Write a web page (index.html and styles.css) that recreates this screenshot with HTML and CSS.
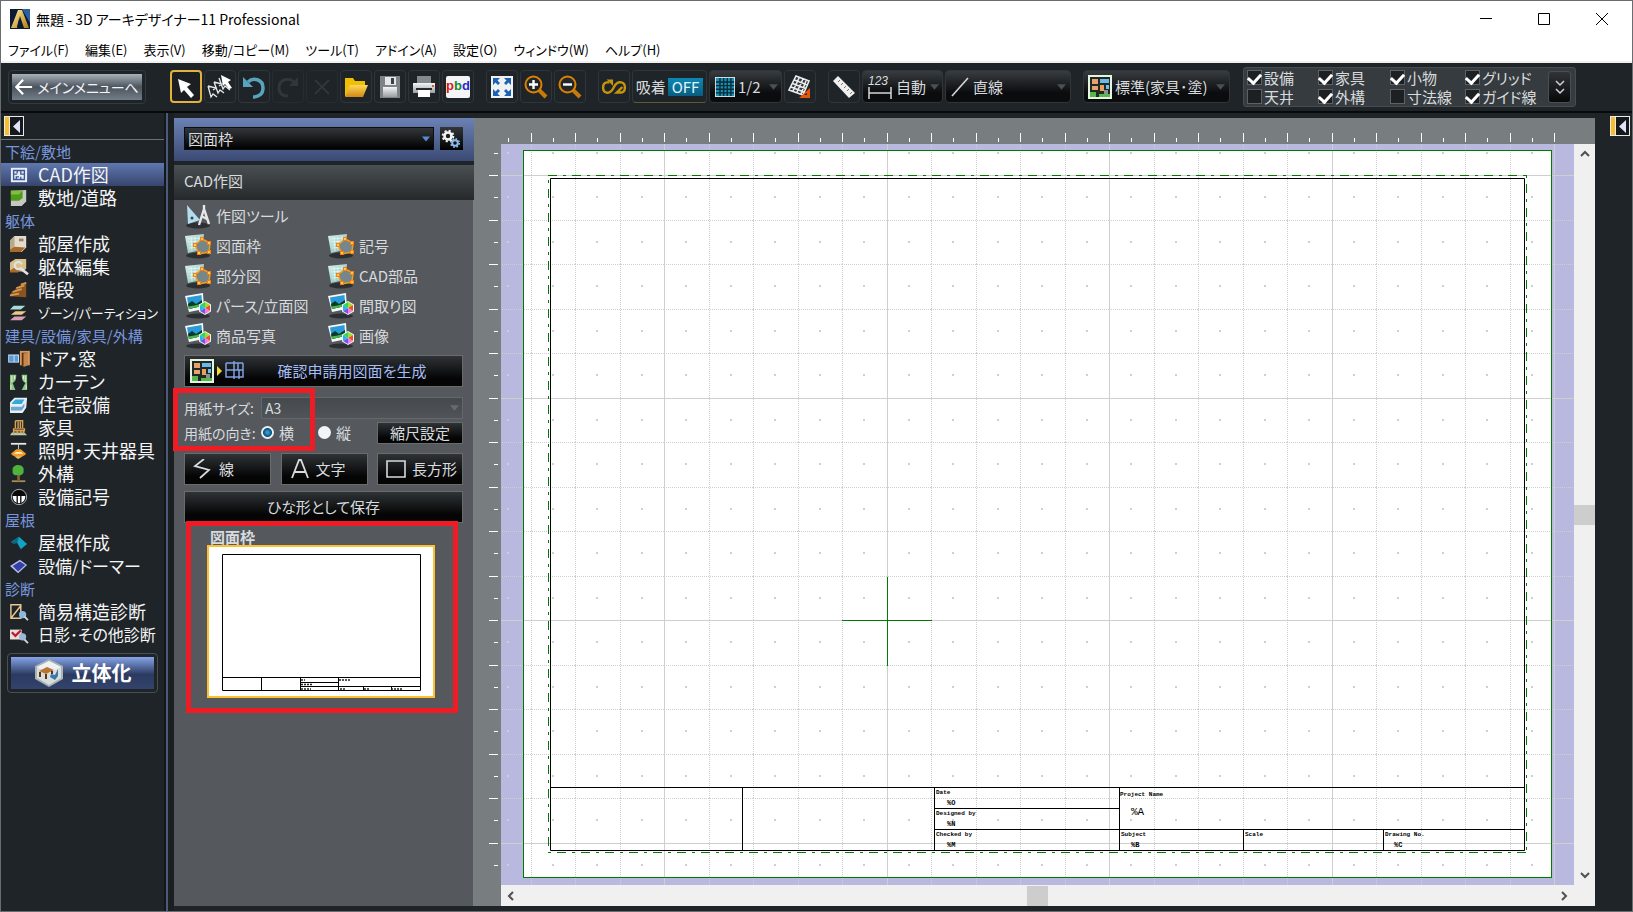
FILE: index.html
```html
<!DOCTYPE html>
<html lang="ja">
<head>
<meta charset="utf-8">
<title>無題 - 3D アーキデザイナー11 Professional</title>
<link rel="stylesheet" href="styles.css">
</head>
<body>
<svg class="defs" aria-hidden="true">
  <defs>
    <linearGradient id="gold" x1="0" y1="0" x2="1" y2="1"><stop offset="0" stop-color="#fff0a0"/><stop offset="1" stop-color="#b57a10"/></linearGradient>
    <linearGradient id="metal" x1="0" y1="0" x2="0" y2="1"><stop offset="0" stop-color="#f4f5f6"/><stop offset="1" stop-color="#9a9ea3"/></linearGradient>
    <linearGradient id="folder" x1="0" y1="0" x2="0" y2="1"><stop offset="0" stop-color="#ffd75a"/><stop offset="1" stop-color="#d08a12"/></linearGradient>
    <linearGradient id="tile" x1="0" y1="0" x2="1" y2="1"><stop offset="0" stop-color="#d9f2ee"/><stop offset="1" stop-color="#7fb8b2"/></linearGradient>
    <symbol id="i-arrow" viewBox="0 0 10 6"><path d="M0 0h10L5 6z" fill="currentColor"/></symbol>
    <symbol id="i-dock" viewBox="0 0 20 20"><path d="M0 0h20v20H0z" fill="#e8eaee"/><path d="M1 1h4v18H1z" fill="#f8bd2a"/><path d="M6 1h13v18H6z" fill="#16191c"/><path d="M16 4v13l-7-6.500z" fill="#dfe4fa"/></symbol>
    <symbol id="i-plan" viewBox="0 0 24 24"><path d="M0 0h24v24H0z" fill="#e6f4e0"/><path d="M2 2h20v20H2z" fill="#1f2a24"/><path d="M2 17h6v5H2zM11 19h11v3H11z" fill="#55b84e"/><path d="M4 4h6v5H4zM4 11h6v4H4z" fill="#e8a070"/><path d="M12 4h9v4h-9z" fill="#6ab8ee"/><path d="M12 10h4v6h-4z" fill="#e8a05a"/><path d="M18 10h3v4h-3z" fill="#6cc0f0"/><path d="M16 15h4v4h-4z" fill="#8a9094"/></symbol>
    <symbol id="i-shape" viewBox="0 0 26 26"><ellipse cx="13" cy="22.500" rx="12" ry="3" fill="#2c3033"/><path d="M0 3l19-2-2 16-14 3z" fill="url(#tile)"/><path d="M3 6l13-1M3 9l13-1M4 12l12-1M4 15l11-1M6 4l1 14M10 4v13M14 3v13" stroke="#f4fffc" stroke-width=".6"/><path d="M10 12l7-6 8 4-1 9-10 2z" fill="#75878a" stroke="#e8a020" stroke-width="1.500"/><path d="M8 10h4v4H8zM15 4h4v4h-4zM22 8h4v4h-4zM22 17h4v4h-4zM12 18h4v4h-4z" fill="#ff7a12"/><path d="M9 11h2v2H9zM16 5h2v2h-2zM23 9h2v2h-2zM23 18h2v2h-2zM13 19h2v2h-2z" fill="#ffd04a"/></symbol>
    <symbol id="i-photo" viewBox="0 0 26 26"><ellipse cx="13" cy="23" rx="12" ry="2.500" fill="#2c3033"/><path d="M0 3l18-3 1 16-15 3z" fill="#f6f8f8"/><path d="M2 4.500l14.500-2.400.7 11L4 16z" fill="#2a9ad8"/><path d="M3 11l4-3 4 3 6-4v6L4 16z" fill="#0c3a2a"/><path d="M3.500 13.500l6-1 7.500-2v2.500L4 16z" fill="#49b845"/><path d="M20 8l6 3.500v7L20 22l-6-3.500v-7z" fill="#f4f4f4"/><path d="M20 15V9l5 3z" fill="#9be02c"/><path d="M20 15l5-3v6z" fill="#f05028"/><path d="M20 15l5 3-5 3z" fill="#f080d8"/><path d="M20 15v6l-5-3z" fill="#7a50e8"/><path d="M20 15l-5 3v-6z" fill="#22b8e8"/><path d="M20 15l-5-3 5-3z" fill="#38d060"/></symbol>
    <pattern id="dots" patternUnits="userSpaceOnUse" x="6" y="8" width="89" height="89"><path d="M0 0h2v2H0zM45 0h2v2h-2zM0 44h2v2H0zM45 44h2v2h-2z" fill="#cfcfcf"/></pattern>
    <pattern id="cells" patternUnits="userSpaceOnUse" x="74" y="31" width="89" height="89"><path d="M.5 0v89M45.500 0v89M0 .5h89M0 45.500h89" stroke="#cfcfcf" stroke-dasharray="1 1"/></pattern>
    <pattern id="blocks" patternUnits="userSpaceOnUse" x="163" y="31" width="445" height="445"><path d="M.5 0v445M223.500 0v445M0 .5h445M0 223.500h445" stroke="#cfcfcf"/></pattern>
    <pattern id="ticks-x" patternUnits="userSpaceOnUse" x="74" y="0" width="89" height="26"><path d="M.5 15v9M22.500 20v4M45.500 15v9M67.500 20v4" stroke="#fff"/></pattern>
    <pattern id="ticks-y" patternUnits="userSpaceOnUse" x="0" y="31" width="26" height="89"><path d="M15 .5h9M20 22.500h4M15 45.500h9M20 67.500h4" stroke="#fff"/></pattern>
  </defs>
</svg>

<header class="titlebar">
  <svg class="app-icon" viewBox="0 0 20 20"><path d="M0 0h20v20H0z" fill="#0a1b33"/><path d="M12 0h8v14z" fill="#2b5f9f"/><path d="M8 1h4l7 18h-5l-4-12-3 12H1z" fill="url(#gold)"/><path d="M9 10l3 6-5 2z" fill="#0a1b33"/></svg>
  <h1 class="title">無題 - 3D アーキデザイナー11 Professional</h1>
  <div class="win-buttons">
    <button type="button" aria-label="最小化"><svg viewBox="0 0 14 14"><path d="M1 6.500h12"/></svg></button>
    <button type="button" aria-label="最大化"><svg viewBox="0 0 14 14"><path d="M1.500 1.500h11v11h-11z"/></svg></button>
    <button type="button" aria-label="閉じる"><svg viewBox="0 0 14 14"><path d="M1 1l12 12M13 1L1 13"/></svg></button>
  </div>
</header>

<nav class="menubar">
  <button type="button">ファイル(F)</button>
  <button type="button">編集(E)</button>
  <button type="button">表示(V)</button>
  <button type="button">移動/コピー(M)</button>
  <button type="button">ツール(T)</button>
  <button type="button">アドイン(A)</button>
  <button type="button">設定(O)</button>
  <button type="button">ウィンドウ(W)</button>
  <button type="button">ヘルプ(H)</button>
</nav>

<div class="toolbar">
  <button type="button" class="main-menu"><span class="main-menu-face"><svg viewBox="0 0 20 18"><path d="M19 9H2M9 1L1.500 9 9 17" fill="none" stroke="#fff" stroke-width="2.400"/></svg>メインメニューへ</span></button>
  <div class="tools">
    <button type="button" class="tool active" aria-label="選択"><svg viewBox="0 0 26 26"><path d="M5 5l13 5-4 3 7 8-3 3-7-8-3 3z" fill="#fff"/></svg></button>
    <button type="button" class="tool" aria-label="複数選択"><svg viewBox="0 0 26 26"><path d="M1 12l3 11 2-3 4 3M7 8l4 11 2-3 4 3M12 4l4 11 2-3 5 4M1 12l8 2-3 2M7 8l8 2-3 2" fill="none" stroke="#e8e8e8" stroke-width="1.300"/><path d="M14 1l10 5-3 2 4 6-3 1-4-5-2 2z" fill="#fff"/></svg></button>
    <button type="button" class="tool" aria-label="元に戻す"><svg viewBox="0 0 26 26"><path d="M7 8c5-5 15-3 15 6 0 6-4 9-10 9" fill="none" stroke="#58a3bd" stroke-width="3.500"/><path d="M2 3v10h10z" fill="#58a3bd"/></svg></button>
    <button type="button" class="tool off" aria-label="やり直し"><svg viewBox="0 0 26 26"><path d="M19 8C14 3 4 5 4 14c0 6 4 8 9 8" fill="none" stroke="#31363a" stroke-width="3"/><path d="M23 3v9h-9z" fill="#31363a"/></svg></button>
    <button type="button" class="tool off" aria-label="削除"><svg viewBox="0 0 26 26"><path d="M6 6l14 14M20 6L6 20" stroke="#31363a" stroke-width="2"/></svg></button>
    <button type="button" class="tool" aria-label="開く"><svg viewBox="0 0 26 26"><path d="M2 4h8l2 3h10v5L6 22H2z" fill="#f0c000"/><path d="M7 11h18l-5 12H2z" fill="url(#folder)"/></svg></button>
    <button type="button" class="tool" aria-label="保存"><svg viewBox="0 0 26 26"><path d="M3 2h20v22H3z" fill="#7e8387"/><path d="M8 3h11v8H8z" fill="#e6e7e8"/><path d="M14 4h3v6h-3z" fill="#3a3f43"/><path d="M6 13h14v10H6z" fill="url(#metal)"/></svg></button>
    <button type="button" class="tool" aria-label="印刷"><svg viewBox="0 0 26 26"><path d="M6 2h14v7H6z" fill="#83898e"/><path d="M2 9h22v10H2z" fill="url(#metal)"/><path d="M5 14h16v2H5z" fill="#26292c"/><path d="M7 16h12v7H7z" fill="#fff"/><path d="M21 11h2v2h-2z" fill="#df5d23"/></svg></button>
    <button type="button" class="tool" aria-label="部品"><span class="pbd-face"><b class="red">p</b><b class="leaf">b</b><b class="blue">d</b></span></button>
  </div>
  <div class="tools">
    <button type="button" class="tool" aria-label="全体表示"><svg viewBox="0 0 26 26"><path d="M2 2h22v22H2z" fill="#f0f1f2"/><path d="M4 4h7L8.500 6.500 11 9l-2 2-2.500-2.500L4 11zM22 4h-7l2.500 2.500L15 9l2 2 2.500-2.500L22 11zM4 22h7l-2.500-2.500L11 17l-2-2-2.500 2.500L4 15zM22 22h-7l2.500-2.500L15 17l2-2 2.500 2.500L22 15z" fill="#1b62b0"/></svg></button>
    <button type="button" class="tool" aria-label="拡大"><svg viewBox="0 0 26 26"><path d="M15 15l8 8" stroke="#c87a08" stroke-width="4"/><circle cx="10.500" cy="10.500" r="8" fill="#22272b" stroke="#dd8200" stroke-width="2"/><path d="M6 10.500h9M10.500 6v9" stroke="#fff" stroke-width="2.400"/></svg></button>
    <button type="button" class="tool" aria-label="縮小"><svg viewBox="0 0 26 26"><path d="M15 15l8 8" stroke="#c87a08" stroke-width="4"/><circle cx="10.500" cy="10.500" r="8" fill="#22272b" stroke="#dd8200" stroke-width="2"/><path d="M6 10.500h9" stroke="#fff" stroke-width="2.400"/></svg></button>
  </div>
  <div class="tools">
    <button type="button" class="tool" aria-label="連続"><svg viewBox="0 0 28 26"><path d="M9 8H6c-5 1-5 10 0 11 4 1 6-2 8-6s4-6 8-5c5 1 5 10 0 11h-5l6-6" fill="none" stroke="#c4940c" stroke-width="2.600"/><path d="M6 5h7v7z" fill="#c4940c"/></svg></button>
    <button type="button" class="tool snap">吸着<span class="snap-off">OFF</span></button>
    <label class="drop drop-grid" aria-label="グリッド分割"><svg class="drop-icon" viewBox="0 0 22 22"><path d="M0 0h22v22H0z" fill="#dfe5e8"/><path d="M1 1h20v20H1z" fill="#1592b4"/><path d="M5.500 1v20M9.500 1v20M13.500 1v20M17.500 1v20M1 5.500h20M1 9.500h20M1 13.500h20M1 17.500h20" stroke="#0a2a38" stroke-width="1.500"/></svg><select><option>1/2</option></select><svg class="drop-arrow"><use href="#i-arrow"/></svg></label>
    <button type="button" class="tool" aria-label="グリッド設定"><svg viewBox="0 0 26 26"><path d="M9 2l13 5-6 14L2 16z" fill="#30363a"/><path d="M9 2l13 5-6 14L2 16zM7.500 6l13 5M5.500 9.500l13 5M4 13l13 5M12 4L6 17M16 5l-6 13M19 7l-5 13" fill="none" stroke="#ececec" stroke-width="1.600"/><path d="M23 14v10H12z" fill="#e2560e"/><path d="M20 19v2h-3z" fill="#22272b"/></svg></button>
  </div>
  <div class="tools">
    <button type="button" class="tool" aria-label="計測"><svg viewBox="0 0 26 26"><path d="M7 2l17 17-6 5L2 7z" fill="#f0f0f0"/><path d="M9 6l-2 2M12 9l-2 2M15 12l-2 2M18 15l-2 2M21 18l-2 2" stroke="#777" stroke-width="1"/></svg></button>
    <label class="drop drop-auto" aria-label="寸法"><span class="dim-icon"><i>123</i><svg viewBox="0 0 24 12"><path d="M1 0v12M23 0v12M1 6h22" fill="none" stroke="#d5d8da" stroke-width="1.500"/></svg></span><select><option>自動</option></select><svg class="drop-arrow"><use href="#i-arrow"/></svg></label>
    <label class="drop drop-line" aria-label="線種"><svg class="drop-icon" viewBox="0 0 20 20"><path d="M2 19L18 1" stroke="#d5d8da" stroke-width="1.600"/></svg><select><option>直線</option></select><svg class="drop-arrow"><use href="#i-arrow"/></svg></label>
  </div>
  <label class="drop drop-std" aria-label="表示設定"><svg class="drop-icon std-icon"><use href="#i-plan"/></svg><select><option>標準(家具･塗)</option></select><svg class="drop-arrow"><use href="#i-arrow"/></svg></label>
  <div class="layers">
    <div class="layer-grid">
      <label><input type="checkbox" checked>設備</label><label><input type="checkbox" checked>家具</label><label><input type="checkbox" checked>小物</label><label><input type="checkbox" checked>グリッド</label>
      <label><input type="checkbox">天井</label><label><input type="checkbox" checked>外構</label><label><input type="checkbox">寸法線</label><label><input type="checkbox" checked>ガイド線</label>
    </div>
    <button type="button" class="more" aria-label="その他"><svg viewBox="0 0 10 16"><path d="M1 2l4 4 4-4M1 10l4 4 4-4" fill="none" stroke="#d0d2d4" stroke-width="1.500"/></svg></button>
  </div>
</div>

<main class="body">
  <aside class="sidebar">
    <button type="button" class="dock" aria-label="たたむ"><svg><use href="#i-dock"/></svg></button>
    <nav class="side-nav">
      <h2>下絵/敷地</h2>
      <button type="button" class="selected"><svg viewBox="0 0 24 20"><path d="M3 2h18v16H3z" fill="#e8edf6"/><path d="M6 5h12v10H6zM6 9h4M10 5v3M14 5v4h4M9 15v-3h3M14 12v3" fill="none" stroke="#3c5898" stroke-width="1.500"/></svg>CAD作図</button>
      <button type="button"><svg viewBox="0 0 24 20"><path d="M3 2l17-1v13l-5 5H3z" fill="#c4c8bf"/><path d="M3 2h13v8l-4 3H3z" fill="#4f9a1c"/><path d="M3 2h13l-4 4H3z" fill="#7cc03c"/></svg>敷地/道路</button>
      <h2>躯体</h2>
      <button type="button"><svg viewBox="0 0 24 20"><path d="M2 6l5-5h13v13l-5 5H2z" fill="#e4dccb"/><path d="M2 6l5-5v12l-5 3z" fill="#b9a88a"/><path d="M2 16l5-3 12 1-5 5H2z" fill="#a8692a"/><path d="M12 4h5v3h-5z" fill="#8f8570"/></svg>部屋作成</button>
      <button type="button"><svg viewBox="0 0 24 20"><path d="M2 5l6-4h12v11l-4 3H2z" fill="#d9c08a"/><path d="M2 14l6-4 5 3-2 3H2z" fill="#a8692a"/><path d="M13 11l9 7" stroke="#dfe1e3" stroke-width="3"/><path d="M15 7a4 4 0 1 0-2 5" fill="none" stroke="#dfe1e3" stroke-width="2.500"/></svg>躯体編集</button>
      <button type="button"><svg viewBox="0 0 24 20"><path d="M2 17l2-5h4V8h4V5h4l4-4v17z" fill="#8a5420"/><path d="M2 16l10-2M5 12l10-3M9 8l9-3M14 4l6-2" stroke="#d89a50" stroke-width="2"/></svg>階段</button>
      <button type="button" class="long"><svg viewBox="0 0 24 20"><path d="M6 2h13l-5 4H2z" fill="#a8dcd8"/><path d="M8 8h12l-5 4H3z" fill="#ecc888"/><path d="M7 14h13l-5 4H2z" fill="#d8a0b4"/></svg>ゾーン/パーティション</button>
      <h2>建具/設備/家具/外構</h2>
      <button type="button"><svg viewBox="0 0 24 20"><path d="M0 5h12v9H0z" fill="#cfe4f8"/><path d="M1 6h5v7H1zM7 6h4v7H7z" fill="#5b9ad4"/><path d="M13 1h11v16H13z" fill="#d89a60"/><path d="M15 3h7v14h-7z" fill="#5a3414"/><path d="M17 4l5-1v14l-5 2z" fill="#c8874a"/></svg>ドア・窓</button>
      <button type="button"><svg viewBox="0 0 24 20"><path d="M2 2h7c0 5-1 8-4 9l3 8H2zM21 2h-6c0 5 1 8 4 9l-4 8h6z" fill="#8cc484"/><path d="M4 3v7M7 3v4M19 3v7M17 3v4M3 13v5M20 13v5" stroke="#e4f6df"/></svg>カーテン</button>
      <button type="button"><svg viewBox="0 0 24 20"><path d="M2 7l5-5h14l-1 11-4 6H2z" fill="#e4f0f6"/><path d="M5 7l3-3h10l-3 5H4z" fill="#36a8d8"/><path d="M3 12h12l3-4v4l-3 4H3z" fill="#6ca8d0"/></svg>住宅設備</button>
      <button type="button"><svg viewBox="0 0 24 20"><path d="M4 15h14l3 3H2z" fill="#b8ccb0"/><path d="M8 2h8v8M8 2v8M6 11h12v2H6zM6 13v4M17 13v4M10 13v3M14 13v3M11 3v7M13.500 3v7" fill="none" stroke="#d8a050" stroke-width="1.600"/></svg>家具</button>
      <button type="button"><svg viewBox="0 0 24 20"><path d="M3 1h17v2H3z" fill="#e8e8e8"/><path d="M11.500 3v5" stroke="#ddd"/><path d="M9 8h5l6 5c-4 5-13 5-17 0z" fill="#f09a28"/><path d="M9 11h5l3 2H6z" fill="#fff0c8"/><path d="M7 16h9l-5 3z" fill="#e8c060"/></svg>照明・天井器具</button>
      <button type="button"><svg viewBox="0 0 24 20"><path d="M4 17h15v2H4z" fill="#a09058"/><path d="M10 10h3v8h-3z" fill="#8a6030"/><path d="M11 0c5 0 7 4 6 6 1 4-3 6-6 5-4 1-7-1-6-5-1-3 2-6 6-6z" fill="#4eb33c"/></svg>外構</button>
      <button type="button"><svg viewBox="0 0 24 20"><circle cx="12" cy="10" r="8.500" fill="#0a0a0a" stroke="#b8babc"/><path d="M5 9h14c0 5-3 8-7 8s-7-3-7-8z" fill="#fff"/><path d="M10 9v8M14 9v8" stroke="#111" stroke-width="1.500"/></svg>設備記号</button>
      <h2>屋根</h2>
      <button type="button"><svg viewBox="0 0 24 20"><path d="M3 9l9-6 9 8-7 6-4-7z" fill="#12a3c4"/><path d="M3 9l9-6-2 7-4 1z" fill="#0b6a88"/></svg>屋根作成</button>
      <button type="button" class="snug"><svg viewBox="0 0 24 20"><path d="M2 10l11-7 8 6-10 9z" fill="#b8bde8"/><path d="M5 10l8-5 6 4-8 7z" fill="#3440a8"/></svg>設備/ドーマー</button>
      <h2>診断</h2>
      <button type="button"><svg viewBox="0 0 24 20"><path d="M3 2h11v15H3zM3 17L14 3" fill="none" stroke="#e8c890" stroke-width="1.600"/><circle cx="16" cy="13" r="4" fill="#8cb8e0"/><path d="M18 15l4 4" stroke="#d0d4d8" stroke-width="2"/></svg>簡易構造診断</button>
      <button type="button" class="tight"><svg viewBox="0 0 24 20"><path d="M2 4h13v11H2z" fill="#e8e0dc"/><path d="M4 7l4 4 6-6" fill="none" stroke="#c01c30" stroke-width="2.500"/><circle cx="16" cy="12" r="4" fill="#9cb8d4"/><path d="M18 15l4 4" stroke="#d0d4d8" stroke-width="2"/></svg>日影･その他診断</button>
    </nav>
    <button type="button" class="solid"><span class="solid-face"><svg viewBox="0 0 30 28"><path d="M15 0l14 7v13l-14 8L1 20V7z" fill="#aab2b2"/><path d="M15 2l12 6v11l-12 7-12-7V8z" fill="#d8dddd"/><path d="M15 2l12 6-12 6L3 8z" fill="#eef2f2"/><path d="M5 12l8-4 7 3-8 4z" fill="#b87430"/><path d="M6 13v5M12 15v5M18 12v3" stroke="#5b3410" stroke-width="2"/><path d="M17 15l4 1 3-6v7l-3 4-5-3z" fill="#3a78a8"/></svg>立体化</span></button>
  </aside>

  <section class="panel">
    <div class="panel-head">
      <label class="drop panel-select" aria-label="種類"><select><option>図面枠</option></select><svg class="drop-arrow"><use href="#i-arrow"/></svg></label>
      <button type="button" class="gear" aria-label="設定"><svg viewBox="0 0 22 22"><circle cx="8" cy="8" r="3.500" fill="none" stroke="#f4f4f4" stroke-width="2.600"/><circle cx="8" cy="8" r="5.300" fill="none" stroke="#f4f4f4" stroke-width="2" stroke-dasharray="2.080 2.080"/><circle cx="15" cy="15" r="2.800" fill="none" stroke="#8fbdea" stroke-width="2"/><circle cx="15" cy="15" r="4.200" fill="none" stroke="#8fbdea" stroke-width="1.600" stroke-dasharray="1.650 1.650"/></svg></button>
    </div>
    <h2 class="panel-title">CAD作図</h2>
    <div class="panel-body">
      <div class="part-grid">
        <button type="button" class="full"><svg viewBox="0 0 26 26"><ellipse cx="13" cy="22.500" rx="12" ry="3" fill="#2c3033"/><path d="M2 2l13 15-12 4z" fill="#b4dcec"/><circle cx="7" cy="15" r="1.500" fill="#33454e"/><path d="M19 2v4M19 6l-5 16M19 6l5 15M16 13l6 3" fill="none" stroke="#e6e6e6" stroke-width="2.400"/></svg>作図ツール</button>
        <button type="button"><svg><use href="#i-shape"/></svg>図面枠</button>
        <button type="button"><svg><use href="#i-shape"/></svg>記号</button>
        <button type="button"><svg><use href="#i-shape"/></svg>部分図</button>
        <button type="button"><svg><use href="#i-shape"/></svg>CAD部品</button>
        <button type="button"><svg><use href="#i-photo"/></svg>パース/立面図</button>
        <button type="button"><svg><use href="#i-photo"/></svg>間取り図</button>
        <button type="button"><svg><use href="#i-photo"/></svg>商品写真</button>
        <button type="button"><svg><use href="#i-photo"/></svg>画像</button>
      </div>
      <button type="button" class="dark generate"><svg class="gen-icon" viewBox="0 0 56 24"><use href="#i-plan" width="24" height="24"/><path d="M27 7l5 5-5 5z" fill="#f8d838"/><path d="M36 4h8M36 4v14h8M36 11h8v9M44 2v9h9M53 4v14h-9M48 4v7M44 4h9M49 11v9" fill="none" stroke="#7fa0e0" stroke-width="1.500"/></svg><span>確認申請用図面を生成</span></button>
      <div class="paper">
        <div class="paper-row">
          <label for="paper-size">用紙サイズ:</label>
          <span class="drop size-select"><select id="paper-size"><option>A3</option></select><svg class="drop-arrow"><use href="#i-arrow"/></svg></span>
        </div>
        <div class="paper-row">
          <span>用紙の向き:</span>
          <label class="radio"><input type="radio" name="dir" checked>横</label>
          <label class="radio"><input type="radio" name="dir">縦</label>
          <button type="button" class="dark scale">縮尺設定</button>
        </div>
        <div class="mark"></div>
      </div>
      <div class="draw-row">
        <button type="button" class="dark"><svg viewBox="0 0 20 20"><path d="M11 0L2 7l14 4-9 8" fill="none" stroke="#d8dadc" stroke-width="1.800"/></svg>線</button>
        <button type="button" class="dark"><svg viewBox="0 0 20 20"><path d="M2 19L9 1h2l7 18M5 13h10" fill="none" stroke="#d8dadc" stroke-width="1.800"/></svg>文字</button>
        <button type="button" class="dark"><svg viewBox="0 0 20 20"><path d="M1 2h18v16H1z" fill="none" stroke="#d8dadc" stroke-width="1.600"/></svg>長方形</button>
      </div>
      <button type="button" class="dark save">ひな形として保存</button>
      <figure class="preview">
        <figcaption>図面枠</figcaption>
        <svg viewBox="0 0 224 149"><rect width="224" height="149" fill="#fff"/><path d="M13.500 7.500h198v136h-198zM13.500 130.500h198M52.500 130.500v13M91.500 130.500v13M129.500 130.500v13M91.500 135.500h38M91.500 139.500h120M154.500 139.500v4M182.500 139.500v4" fill="none" stroke="#000"/><path d="M92 133h4M92 137.500h11M92 142h10M130 133h12M131 142h6M155 142h5M182 142h12" stroke="#222" stroke-width="1.500" stroke-dasharray="2 1"/></svg>
      </figure>
    </div>
  </section>

  <section class="work">
    <svg class="ruler-top"><rect width="100%" height="26" fill="url(#ticks-x)"/></svg>
    <svg class="ruler-left"><rect width="26" height="100%" fill="url(#ticks-y)"/></svg>
    <svg class="sheet">
      <rect x="22.500" y="6.500" width="1028" height="727" fill="#fff"/>
      <rect width="100%" height="100%" fill="url(#dots)"/>
      <rect width="100%" height="100%" fill="url(#cells)"/>
      <rect width="100%" height="100%" fill="url(#blocks)"/>
      <rect x="22.500" y="6.500" width="1028" height="727" class="green"/>
      <path d="M47 31.500h978" class="green chain"/>
      <path d="M47.500 31v677" class="green chain chain-left"/>
      <path d="M47 708.500h978M1025.500 31v677" class="green chain chain-low"/>
      <path d="M341 476.500h90M386.500 433v89" class="green"/>
      <path d="M49.500 34.500h974v672h-974zM49.500 643.500h974M241.500 643v63M433.500 643v63M618.500 643v63M433 664.500h185M433 685.500h590M742.500 685v21M882.500 685v21" class="ink"/>
      <g class="tiny">
        <text x="435" y="650">Date</text><text x="446" y="661" class="value">%O</text>
        <text x="435" y="671">Designed by</text><text x="446" y="682" class="value">%N</text>
        <text x="435" y="692">Checked by</text><text x="446" y="703" class="value">%M</text>
        <text x="619" y="652">Project Name</text><text x="630" y="671" class="big">%A</text>
        <text x="620" y="692">Subject</text><text x="630" y="703" class="value">%B</text>
        <text x="744" y="692">Scale</text>
        <text x="884" y="692">Drawing No.</text><text x="893" y="703" class="value">%C</text>
      </g>
    </svg>
    <div class="vscroll"><svg viewBox="0 0 10 10"><path d="M1 7l4-4 4 4"/></svg><span class="thumb"></span><svg viewBox="0 0 10 10"><path d="M1 3l4 4 4-4"/></svg></div>
    <div class="hscroll"><svg viewBox="0 0 10 10"><path d="M7 1L3 5l4 4"/></svg><span class="thumb"></span><svg viewBox="0 0 10 10"><path d="M3 1l4 4-4 4"/></svg></div>
  </section>
  <aside class="right-dock"><button type="button" class="dock" aria-label="開く"><svg><use href="#i-dock"/></svg></button></aside>
</main>
</body>
</html>
```
FILE: styles.css
```css
* { box-sizing: border-box; }
body {
  margin: 0;
  height: 100vh;
  display: flex;
  flex-direction: column;
  overflow: hidden;
  border: 1px solid #6a6d6f;
  background: #1f2428;
  color: #d8dbde;
  font: 15px/20px "Noto Sans CJK JP", "Noto Sans", sans-serif;
  font-feature-settings: "palt";
}
button, select, input { font: inherit; font-feature-settings: inherit; color: inherit; margin: 0; }
button { padding: 0; border: 0; background: none; white-space: nowrap; }
h1, h2, figure { margin: 0; font-weight: 400; font-size: 15px; }
svg { display: block; flex: none; }
.defs { position: absolute; width: 0; height: 0; }

.titlebar { display: flex; align-items: center; flex: none; height: 37px; padding: 0 1px 2px 9px; background: #fff; color: #000; }
.app-icon { width: 20px; height: 20px; }
.title { margin-left: 6px; font-size: 14px; }
.win-buttons { display: flex; margin-left: auto; }
.win-buttons button { width: 58px; height: 34px; display: flex; align-items: center; justify-content: center; }
.win-buttons svg { width: 14px; height: 14px; fill: none; stroke: #000; }
.menubar { display: flex; flex: none; gap: 16px; height: 25px; padding-left: 7px; background: #fff; color: #000; border-bottom: 2px solid #f0f0f0; font-size: 13px; }

.toolbar { display: flex; align-items: center; flex: none; gap: 12px; height: 50px; padding: 0 0 1px 7px; border-bottom: 2px solid #08090a; }
.main-menu { width: 138px; height: 34px; margin-right: 12px; padding: 3px; border: 1px solid #33393d; border-radius: 4px; }
.main-menu-face { display: flex; align-items: center; justify-content: center; gap: 4px; height: 26px; background: linear-gradient(#a9b0b8, #4c555e 50%, #737d87); color: #f2f4f6; font-size: 14px; }
.main-menu-face svg { width: 18px; height: 18px; }
.tools { display: flex; gap: 2px; }
.tool { width: 32px; height: 33px; display: flex; align-items: center; justify-content: center; border: 1px solid #2f3539; border-radius: 4px; }
.tool svg { width: 26px; height: 26px; }
.tool.active { border: 2px solid #e3b23c; background: #1c1f22; }
.tool.off { border-color: #272c30; }
.pbd-face { display: flex; width: 24px; height: 22px; justify-content: center; background: #f4f4f6; font: 700 13px/20px "Liberation Sans", sans-serif; border-radius: 2px; }
.red { color: #d8141c; }
.leaf { color: #128a32; }
.blue { color: #2a28c8; }
.tool.snap { width: 75px; gap: 2px; border-bottom-color: #5e5836; }
.snap-off { padding: 0 4px; background: linear-gradient(#0c88b4, #0a5c80); color: #e0f4ff; line-height: 18px; }
.drop { display: flex; align-items: center; height: 33px; padding: 0 6px; border: 1px solid #2f3539; border-radius: 4px; background: linear-gradient(#383d41, #0b0c0d 70%); }
.drop select { flex: 1; min-width: 0; width: 0; height: 22px; padding: 0; border: 0; appearance: none; background: none; line-height: 20px; }
.drop-icon { width: 20px; height: 20px; margin-right: 3px; }
.drop-arrow { width: 9px; height: 6px; color: #4a5054; }
.drop-grid { width: 73px; padding: 0 3px 0 5px; }
.drop-auto { width: 81px; padding: 0 3px 0 5px; }
.drop-line { width: 126px; padding: 0 4px; }
.drop-std { width: 147px; padding: 0 4px; }
.std-icon { width: 24px; height: 24px; }
.dim-icon { display: grid; width: 24px; margin-right: 4px; font: 12px/12px "Liberation Sans", sans-serif; }
.dim-icon svg { width: 24px; height: 12px; }
.layers { display: flex; flex: none; align-items: center; justify-content: space-between; width: 333px; height: 40px; margin-left: 1px; padding: 0 4px 0 3px; border: 1px solid #474c50; border-radius: 3px; background: #363b3f; }
.layer-grid { display: grid; grid-template-columns: 71px 72px 75px 74px; grid-auto-rows: 19px; }
.layer-grid label { display: flex; align-items: center; gap: 2px; line-height: 19px; white-space: nowrap; }
.layer-grid input { appearance: none; width: 15px; height: 15px; border: 1px solid #5c6165; background: #1d2023; display: grid; place-items: center; }
.layer-grid input:checked::before { content: ""; width: 6px; height: 10px; margin-bottom: 3px; border: solid #fff; border-width: 0 3px 3px 0; transform: rotate(42deg); }
.more { display: grid; place-items: center; width: 23px; height: 32px; border: 1px solid #4a4f53; border-radius: 3px; background: linear-gradient(#303438, #070808); }
.more svg { width: 10px; height: 16px; }

.body { display: flex; flex: 1; min-height: 0; }
.dock { display: block; }
.dock svg { width: 20px; height: 20px; }
.sidebar { flex: none; width: 173px; border-right: 6px solid #1b1f22; box-shadow: inset -2px 0 #4c5b7c, inset -4px 0 #15181b; }
.sidebar .dock { margin: 3px; }
.side-nav { display: flex; flex-direction: column; width: 163px; border-top: 1px solid #6b6f72; }
.side-nav h2 { height: 23px; padding-left: 4px; color: #7896de; line-height: 23px; }
.side-nav button { display: flex; align-items: center; gap: 8px; height: 23px; padding-left: 7px; color: #f4f5f6; font-size: 18px; line-height: 23px; }
.side-nav .long { font-size: 13px; }
.side-nav .snug { font-size: 17px; }
.side-nav .tight { font-size: 16px; }
.side-nav svg { width: 22px; height: 18px; }
.side-nav .selected { background: linear-gradient(#6078b0, #36456c); }
.solid { width: 151px; height: 40px; margin: 7px 6px; padding: 3px; border: 1px solid #4a4f53; border-radius: 4px; }
.solid-face { display: flex; align-items: center; justify-content: center; gap: 8px; height: 32px; background: linear-gradient(#86a4e8, #2b3a60 55%, #33436c); color: #fff; font-size: 20px; font-weight: 700; }
.solid-face svg { width: 30px; height: 28px; }

.panel { display: flex; flex-direction: column; flex: none; width: 300px; padding: 5px 0; }
.panel-head { display: flex; align-items: center; gap: 6px; height: 43px; padding: 0 11px 2px 10px; background: linear-gradient(#6c82b4, #3b4a74); }
.panel-select { flex: 1; height: 23px; border: 1px solid #0b0d12; border-radius: 0; background: linear-gradient(#33363a, #000); padding: 0 3px; }
.panel-select .drop-arrow { color: #5b8ad0; width: 8px; }
.gear { width: 23px; height: 23px; background: linear-gradient(#33363a, #000); }
.gear svg { width: 22px; height: 22px; }
.panel-title { height: 35px; margin-top: 4px; padding-left: 10px; background: linear-gradient(#4a4f52, #25292c); line-height: 32px; }
.panel-body { flex: 1; padding: 1px 10px 0; background: #55595d; border-right: 1px solid #7b8084; }
.part-grid { display: grid; grid-template-columns: 143px 1fr; grid-auto-rows: 30px; margin-bottom: 4px; }
.part-grid button { display: flex; align-items: center; gap: 5px; padding-left: 1px; }
.part-grid .full { grid-column: 1 / 3; }
.part-grid svg { width: 26px; height: 26px; }
.dark { display: flex; align-items: center; justify-content: center; border: 1px solid #696c6c; background: linear-gradient(#2f3336, #050505 75%); line-height: 18px; }
.generate { width: 100%; height: 32px; padding-left: 5px; color: #a4bdf4; }
.generate span { flex: 1; padding-right: 4px; }
.gen-icon { width: 56px; height: 24px; }
.paper { position: relative; margin-top: 8px; }
.paper-row { display: flex; align-items: center; height: 25px; }
.paper-row > :first-child { width: 77px; white-space: nowrap; font-size: 14px; }
.size-select { flex: 1; height: 22px; padding: 0 3px; border-color: #63676a; border-radius: 0; background: linear-gradient(#44494d, #505458); font-size: 14px; }
.size-select .drop-arrow { color: #676b6e; }
.radio { display: flex; align-items: center; gap: 5px; width: 57px; }
.radio input { appearance: none; width: 13px; height: 13px; border-radius: 50%; background: #f2f5f7; }
.radio input:checked { background: radial-gradient(circle, #2c9ad4 0 1px, #0f4c74 4px, #e8f0f5 5px); }
.scale { width: 86px; height: 22px; margin-left: auto; }
.mark { position: absolute; left: -11px; top: -7px; width: 142px; height: 63px; border: 5px solid #ee1c24; }
.draw-row { display: grid; grid-template-columns: 87px 87px 86px; justify-content: space-between; margin-top: 8px; }
.draw-row .dark { height: 32px; padding-left: 8px; gap: 6px; justify-content: flex-start; }
.draw-row svg { width: 20px; height: 20px; }
.save { width: 100%; height: 32px; margin-top: 6px; }
.preview { width: 272px; height: 192px; margin: -2px 0 0 2px; padding: 3px 17px 0 16px; position: relative; border: 5px solid #ee1c24; }
.preview figcaption { padding-left: 3px; font-weight: 700; line-height: 16px; }
.preview svg { width: 228px; border: 2px solid #ffc02f; }

.work { flex: 1; min-width: 0; display: grid; grid-template: 26px 1fr 21px / 27px 1fr 21px; margin: 5px 0; background: #787d80; }
.ruler-top { grid-area: 1 / 2; width: 100%; height: 26px; }
.ruler-left { grid-area: 2 / 1; width: 26px; height: 100%; }
.sheet { grid-area: 2 / 2; width: 100%; height: 100%; background: #b9b8de; overflow: hidden; }
.sheet .green { fill: none; stroke: #007a00; }
.sheet .chain { stroke-dasharray: 9 6 3 6; }
.sheet .chain-left { stroke-dashoffset: 10; }
.sheet .chain-low { stroke-dashoffset: 15; }
.ink { fill: none; stroke: #000; }
.tiny { font: 700 6px "Liberation Mono", monospace; fill: #000; }
.tiny .value { font-size: 7px; }
.tiny .big { font-size: 11px; font-weight: 400; }
.vscroll, .hscroll { display: flex; align-items: center; justify-content: space-between; background: #f0f0f0; }
.vscroll { grid-area: 2 / 3; flex-direction: column; padding: 5px 0; }
.hscroll { grid-area: 3 / 2 / 4 / 4; padding: 0 26px 0 5px; }
.vscroll svg, .hscroll svg { width: 10px; height: 10px; fill: none; stroke: #505050; stroke-width: 2; }
.thumb { width: 21px; height: 20px; background: #cdcdcd; }
.right-dock { flex: none; width: 37px; padding: 3px 0 0 15px; }
```
